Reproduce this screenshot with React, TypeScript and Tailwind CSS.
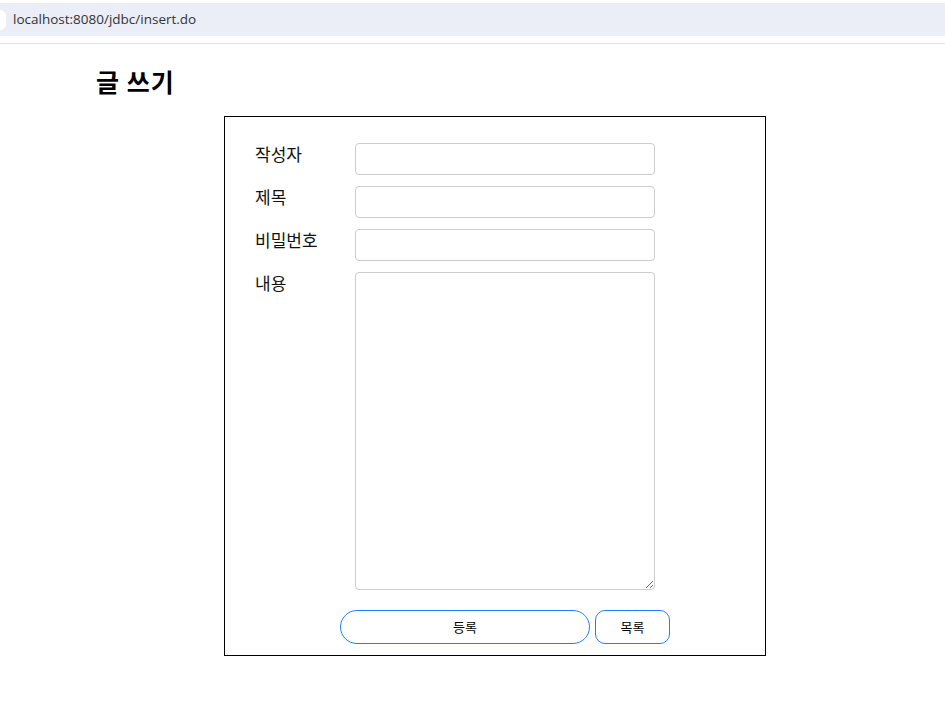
const font = { fontFamily: '"Noto Sans CJK KR", "Noto Sans", sans-serif' };

const fields = ["작성자", "제목", "비밀번호"];

const App = () => {
  return (
    <div className="min-h-screen w-full bg-white text-black" style={font}>
      {/* Address bar */}
      <div className="h-[44px] border-b border-[#e2e2e2] pt-[3px]">
        <div className="flex h-[33px] items-center bg-[#ebeef7]">
          <div className="h-[20px] w-[6px] rounded-r-full bg-white" />
          <span
            className="ml-[7px] text-[13.5px] text-[#333]"
            style={{ fontFamily: '"Open Sans", "Liberation Sans", sans-serif' }}
          >
            localhost:8080/jdbc/insert.do
          </span>
        </div>
      </div>

      {/* Title */}
      <h1 className="mt-[21px] pl-[96px] text-[25px] font-bold leading-[32px] tracking-[1px]">글 쓰기</h1>

      {/* Form box */}
      <div className="ml-[224px] mt-[19px] flex h-[540px] w-[542px] flex-col border border-black">
        <div className="ml-[30px] mt-[26px] flex flex-col gap-[11px]">
          {fields.map((f) => (
            <div key={f} className="flex">
              <label className="w-[100px] pt-[1px] text-[17px] leading-[20px] text-[#111]">{f}</label>
              <input className="h-[32px] w-[300px] rounded-[4px] border border-[#cccccc] outline-none" />
            </div>
          ))}
          <div className="flex">
            <label className="w-[100px] pt-[1px] text-[17px] leading-[20px] text-[#111]">내용</label>
            <textarea className="h-[318px] w-[300px] rounded-[4px] border border-[#cccccc] outline-none" />
          </div>
        </div>
        <div className="ml-[115px] mt-[20px] flex gap-[5px]">
          <button className="h-[34px] w-[250px] rounded-full border border-[#1f7fff] bg-white text-[13px]">
            등록
          </button>
          <button className="h-[34px] w-[75px] rounded-[10px] border border-[#1f7fff] bg-white text-[13px]">
            목록
          </button>
        </div>
      </div>
    </div>
  );
};

export default App;
